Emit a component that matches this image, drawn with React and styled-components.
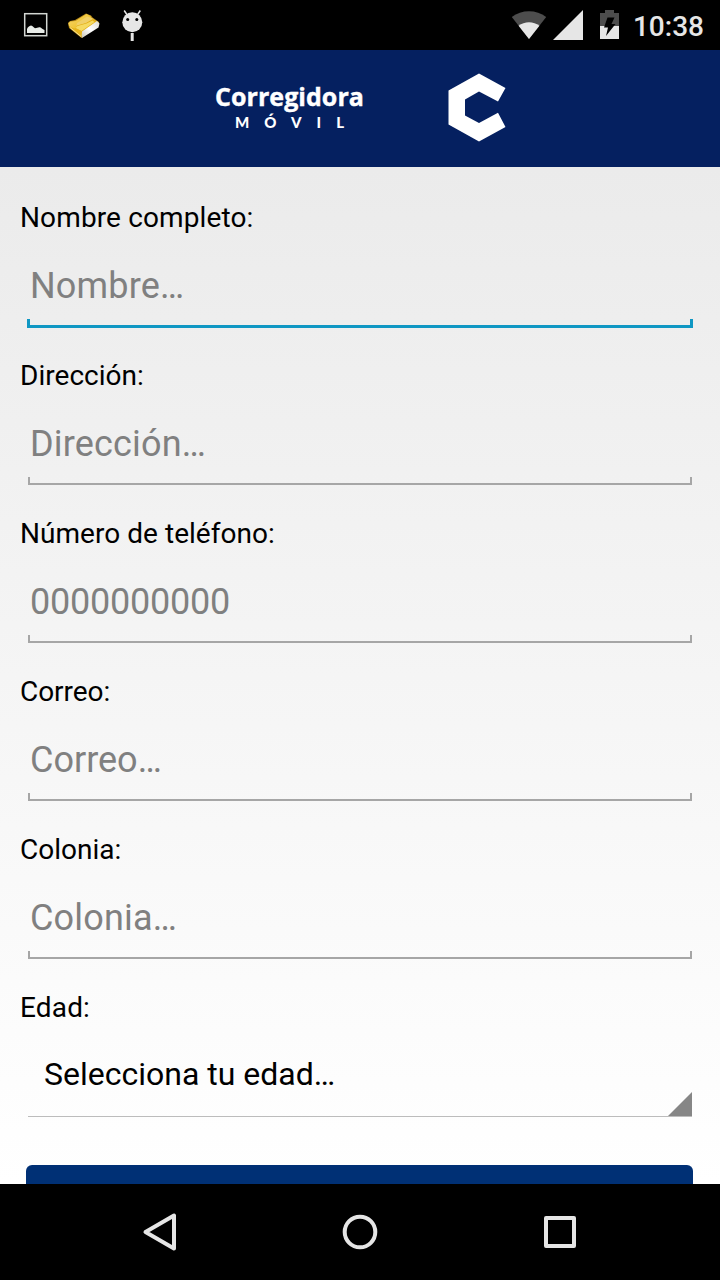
import React from "react";
import styled, { createGlobalStyle } from "styled-components";

const GlobalStyle = createGlobalStyle`
  * {
    box-sizing: border-box;
  }
  body {
    margin: 0;
    background-color: #000;
    font-family: Roboto, sans-serif;
  }
`;

const Screen = styled.div`
  display: flex;
  flex-direction: column;
  width: 720px;
  height: 1280px;
  overflow: hidden;
`;

const StatusBar = styled.div`
  flex: none;
  height: 50px;
  padding: 0 16px 0 22px;
  display: flex;
  align-items: center;
  justify-content: space-between;
  background-color: #000;
`;

const StatusGroup = styled.div`
  display: flex;
  align-items: center;
  gap: ${({ $gap }) => $gap}px;
`;

const Clock = styled.span`
  margin-left: -4px;
  padding-top: 2px;
  font-size: 28px;
  font-weight: 500;
  line-height: 33px;
  color: #e6e6e6;
`;

const Header = styled.header`
  flex: none;
  height: 117px;
  padding: 0 213px 3px 215px;
  display: flex;
  align-items: center;
  justify-content: space-between;
  background-color: #052060;
`;

const Brand = styled.div`
  display: flex;
  flex-direction: column;
  color: #fff;
  white-space: nowrap;
`;

const BrandName = styled.span`
  font-family: "Open Sans", sans-serif;
  font-size: 25px;
  font-weight: 700;
  line-height: 28px;
  letter-spacing: 0.05px;
  -webkit-text-stroke: 0.4px #fff;
`;

const BrandTag = styled.span`
  padding: 2px 0 0 20px;
  font-family: Lato, sans-serif;
  font-size: 15px;
  font-weight: 900;
  line-height: 20px;
  letter-spacing: 15px;
`;

const Form = styled.form`
  flex: 1;
  min-height: 0;
  overflow: hidden;
  padding: 34px 20px 0;
  background: linear-gradient(#ebebeb, #fff);
`;

const Field = styled.div`
  height: 158px;
`;

const Label = styled.label`
  display: block;
  height: 33px;
  font-size: 28px;
  line-height: 33px;
  letter-spacing: ${({ $tracking = 0 }) => $tracking}px;
  color: #000;
`;

const Input = styled.input`
  display: block;
  width: 100%;
  height: 85px;
  padding: 31px 10px 12px;
  border: 0;
  outline: 0;
  background: transparent;
  font-family: Roboto, sans-serif;
  font-size: 36px;
  letter-spacing: ${({ $tracking = 0 }) => $tracking}px;
  color: #000;
  &::placeholder {
    color: #808080;
    opacity: 1;
  }
`;

/* Holo style line: a thin rule with small upright ends */
const Underline = styled.div`
  height: ${({ $active }) => ($active ? 9 : 8)}px;
  margin: 0 ${({ $active }) => ($active ? 7 : 8)}px;
  border: ${({ $active }) => ($active ? "3px solid #0f97c3" : "2px solid #a6a6a6")};
  border-top: 0;
`;

const Spinner = styled.div`
  height: 93px;
  margin: 0 8px;
  padding: 31px 0 0 16px;
  display: flex;
  justify-content: space-between;
  border-bottom: 1px solid #bcbcbc;
  font-size: 32px;
  line-height: 38px;
  color: #000;
`;

const Corner = styled.svg`
  align-self: flex-end;
`;

const Submit = styled.button`
  display: block;
  width: 667px;
  height: 90px;
  margin: 48px 6px 0;
  border: 0;
  border-radius: 6px;
  background-color: #003075;
`;

const NavBar = styled.nav`
  flex: none;
  height: 96px;
  display: flex;
  align-items: center;
  justify-content: center;
  gap: 140px;
  background-color: #000;
`;

const NavIcon = styled.svg`
  width: 60px;
  height: 60px;
  fill: none;
  stroke: #e6e6e6;
  stroke-width: 4;
  stroke-linejoin: round;
`;

const PictureIcon = () => (
  <svg width="28" height="30" viewBox="0 0 28 30">
    <rect x="2.7" y="3.7" width="22" height="22" fill="none" stroke="#d2d6d2" strokeWidth="1.5" />
    <path d="M5 23v-4c1-2 2-2.800 4-3.400 2 .4 2.500 2.200 4 2.700 2-.3 3-1.300 5-1 1.500.3 2 2 4.500 2.700v3z" fill="#e8ece8" />
  </svg>
);

const FolderIcon = () => (
  <svg width="34" height="30" viewBox="1 0 34 30">
    <defs>
      <linearGradient id="gold" x1="0" y1="0" x2="1" y2="1">
        <stop offset="0" stopColor="#f6d877" />
        <stop offset=".5" stopColor="#eec22c" />
        <stop offset="1" stopColor="#d9a812" />
      </linearGradient>
      <linearGradient id="paper" x1="0" y1="1" x2="1" y2="0">
        <stop offset="0" stopColor="#c9c6ba" />
        <stop offset=".5" stopColor="#fff" />
        <stop offset="1" stopColor="#dcdad0" />
      </linearGradient>
    </defs>
    <path d="M1 13l2-2 5-1L19 3.500l5 2 1.500 2L32 12v3L14.500 28 2 18z" fill="#b98b18" />
    <path d="M1.500 13l2-1.500 5-.500L19.500 4l4 2 .5 2 6 4-16 14L2 16z" fill="url(#gold)" />
    <path d="M10 13l10-6.500 5 1.500 5 4-15 9-6-3.500z" fill="#f0d069" />
    <path d="M8 19l2-3.500 9-2.500 7-4 4 3-15 10z" fill="#e3ae12" />
    <path d="M8.500 18l2-2 9-2.500 6-3 2 1.500-13 9z" fill="#f5da62" />
    <path d="M15 21.500L30 11l2.500 2.500-1 4L15 28l-1-3z" fill="url(#paper)" />
    <path d="M2 17l12.500 10 .5-5.500-5-2.500z" fill="#e6b41d" />
    <path d="M3 17.500l11 9" stroke="#f4e39b" strokeWidth="1" />
  </svg>
);

const AndroidIcon = () => (
  <svg width="24" height="34" viewBox="0 0 24 34">
    <path d="M4.200 2.500l3 4.500M20.300 2.500l-3 4.500" stroke="#e6e6e6" strokeWidth="1.500" />
    <circle cx="12.300" cy="14.300" r="10" fill="#e6e6e6" />
    <circle cx="7.700" cy="11.500" r="1.500" fill="#000" />
    <circle cx="16.800" cy="11.500" r="1.500" fill="#000" />
    <path d="M12.200 25v8" stroke="#e6e6e6" strokeWidth="3" />
  </svg>
);

const WifiIcon = () => (
  <svg width="36" height="30" viewBox="0 0 36 30">
    <path d="M18 29L.8 7.100C10.500-.700 25.500-.700 35.200 7.100z" fill="#4d4d4d" />
    <path d="M18 29L7.600 15.700C13.300 11 22.700 11 28.400 15.700z" fill="#e6e6e6" />
  </svg>
);

const SignalIcon = () => (
  <svg width="30" height="30" viewBox="0 0 30 30">
    <path d="M30 0v30H0z" fill="#e6e6e6" />
  </svg>
);

const BatteryIcon = () => (
  <svg width="20" height="30" viewBox="0 0 20 30">
    <path d="M0 3h5V0h9v3h5v13H0z" fill="#4d4d4d" />
    <path d="M0 16h19v13H0z" fill="#e6e6e6" />
    <path d="M7.500 7.500h7l-3 6.500h4L6 26l2-8.500H4z" fill="#000" />
  </svg>
);

const HexLogo = () => (
  <svg width="59" height="69" viewBox="0 0 59 69">
    <path d="M31 .500L57.500 15 50 28.500 31 18.500 17 26.500V42.500L31 50 50 39.700 57.500 54 31 68.500.500 51.500V17.500z" fill="#fff" />
  </svg>
);

const fields = [
  { id: "nombre", label: "Nombre completo:", hint: "Nombre…", active: true, labelTracking: 0.13, hintTracking: 0.18 },
  { id: "direccion", label: "Dirección:", hint: "Dirección…", labelTracking: 0.03, hintTracking: 0.18 },
  { id: "telefono", label: "Número de teléfono:", hint: "0000000000", labelTracking: 0.04, hintTracking: -0.22 },
  { id: "correo", label: "Correo:", hint: "Correo…", labelTracking: -0.05 },
  { id: "colonia", label: "Colonia:", hint: "Colonia…", hintTracking: 0.18 },
];

const App = () => {
  return (
    <Screen>
      <GlobalStyle />
      <StatusBar>
        <StatusGroup $gap={18}>
          <PictureIcon />
          <FolderIcon />
          <AndroidIcon />
        </StatusGroup>
        <StatusGroup $gap={17}>
          <StatusGroup $gap={6}>
            <WifiIcon />
            <SignalIcon />
          </StatusGroup>
          <BatteryIcon />
          <Clock>10:38</Clock>
        </StatusGroup>
      </StatusBar>
      <Header>
        <Brand>
          <BrandName>Corregidora</BrandName>
          <BrandTag>MÓVIL</BrandTag>
        </Brand>
        <HexLogo />
      </Header>
      <Form>
        {fields.map((field) => (
          <Field key={field.id}>
            <Label htmlFor={field.id} $tracking={field.labelTracking}>
              {field.label}
            </Label>
            <Input id={field.id} placeholder={field.hint} $tracking={field.hintTracking} />
            <Underline $active={field.active} />
          </Field>
        ))}
        <Label $tracking={0.15}>Edad:</Label>
        <Spinner>
          Selecciona tu edad…
          <Corner width="24" height="24" viewBox="0 0 24 24">
            <path d="M24 0v24H0z" fill="#868686" />
          </Corner>
        </Spinner>
        <Submit type="button" />
      </Form>
      <NavBar>
        <NavIcon viewBox="0 0 60 60">
          <path d="M15.500 30L44 13.500v33z" />
        </NavIcon>
        <NavIcon viewBox="0 0 60 60">
          <circle cx="30" cy="30" r="15.300" />
        </NavIcon>
        <NavIcon viewBox="0 0 60 60">
          <rect x="16" y="16" width="28" height="28" />
        </NavIcon>
      </NavBar>
    </Screen>
  );
};

export default App;
